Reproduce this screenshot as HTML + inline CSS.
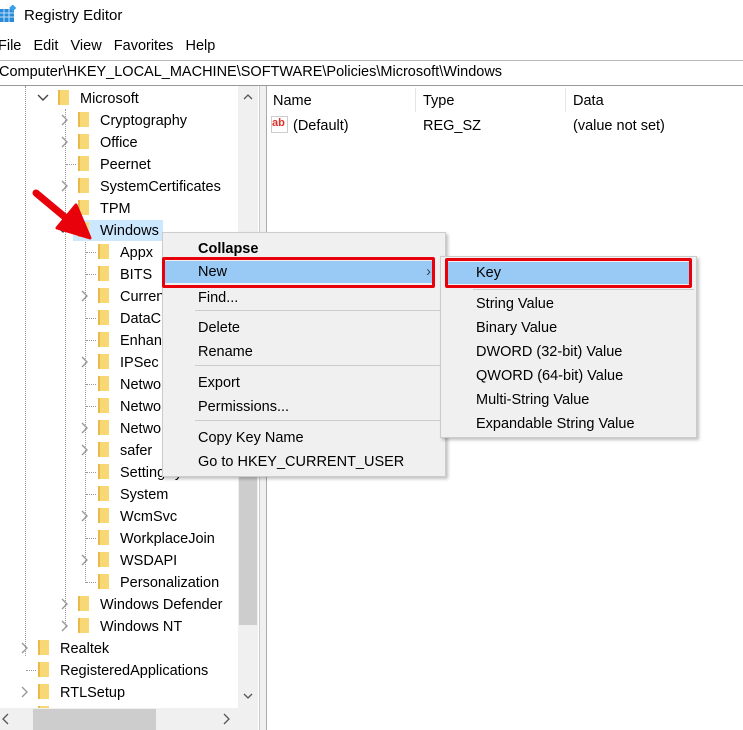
<!DOCTYPE html><html><head><style>
body{margin:0;width:743px;height:730px;overflow:hidden;background:#fff;font-family:"Liberation Sans",sans-serif;font-size:14.5px;color:#000;position:relative}
.a{position:absolute;white-space:nowrap}
.r{position:absolute;height:22px;line-height:22px;white-space:nowrap}
.f{position:absolute;width:11px;height:15px;background:#f8d775;border-left:2px solid #e9b949;box-sizing:border-box}
.c{position:absolute}
.dv{position:absolute;border-left:1px dotted #999}
.dh{position:absolute;border-top:1px dotted #999;width:10px}
.menu{position:absolute;background:#f0f0f0;border:1px solid #ccc;box-shadow:2px 2px 3px rgba(0,0,0,.25)}
.mi{position:absolute;left:0;right:0;height:22px;line-height:22px}
.sep{position:absolute;height:1px;background:#ccc}
</style></head><body>
<svg class="a" style="left:0;top:5px" width="16" height="18"><rect x="0" y="4" width="14" height="13" fill="#2a8ad8"/><path d="M0 8h14M0 12h14M4 4v13M9 4v13" stroke="#bfe0fa" stroke-width="1"/><rect x="10" y="0" width="5" height="5" fill="#3ba0e6" transform="rotate(45 12 3)"/></svg>
<div class="a" style="left:24px;top:7px;font-size:15px">Registry Editor</div>
<div class="a" style="left:-2px;top:38px;font-size:14.5px">File&nbsp;&nbsp;&nbsp;Edit&nbsp;&nbsp;&nbsp;View&nbsp;&nbsp;&nbsp;Favorites&nbsp;&nbsp;&nbsp;Help</div>
<div class="a" style="left:0;top:60px;width:743px;height:24px;border-top:1px solid #bbb;border-bottom:1px solid #999"></div>
<div class="a" style="left:-1px;top:64px;font-size:14.5px">Computer\HKEY_LOCAL_MACHINE\SOFTWARE\Policies\Microsoft\Windows</div>
<div class="a" style="left:259px;top:86px;width:6px;height:644px;border-left:1px solid #ccc;border-right:1px solid #aaa;background:#f0f0f0"></div>
<div class="a" style="left:238px;top:86px;width:20px;height:622px;background:#f0f0f0"></div>
<div class="a" style="left:239px;top:255px;width:18px;height:370px;background:#cdcdcd"></div>
<svg class="a" style="left:241px;top:92px" width="14" height="10"><path d="M3 7L7 3L11 7" stroke="#555" fill="none" stroke-width="1.3"/></svg>
<svg class="a" style="left:241px;top:691px" width="14" height="10"><path d="M3 3L7 7L11 3" stroke="#555" fill="none" stroke-width="1.3"/></svg>
<div class="dv" style="left:25px;top:86px;height:570px"></div>
<div class="dv" style="left:65px;top:109px;height:518px"></div>
<div class="dv" style="left:85px;top:242px;height:341px"></div>
<div class="a" style="left:73px;top:220px;width:90px;height:21px;background:#cce8ff"></div>
<div id="tree"></div>
<div class="a" style="left:273px;top:93px">Name</div>
<div class="a" style="left:415px;top:88px;height:24px;border-left:1px solid #e5e5e5"></div>
<div class="a" style="left:423px;top:93px">Type</div>
<div class="a" style="left:565px;top:88px;height:24px;border-left:1px solid #e5e5e5"></div>
<div class="a" style="left:573px;top:93px">Data</div>
<div class="a" style="left:271px;top:116px;width:17px;height:17px;background:#fff;border:1px solid #ccc;box-sizing:border-box;color:#d9342b;font-size:11px;font-weight:bold;line-height:13px">ab</div>
<div class="a" style="left:293px;top:118px">(Default)</div>
<div class="a" style="left:423px;top:118px">REG_SZ</div>
<div class="a" style="left:573px;top:118px">(value not set)</div>
<div class="menu" style="left:162px;top:232px;width:282px;height:243px">
<div class="mi" style="top:5px;padding-left:35px;font-weight:bold">Collapse</div>
<div class="mi" style="top:28px;left:2px;right:12px;background:#99c9f5;padding-left:33px">New<span style="position:absolute;right:2px;color:#444">&rsaquo;</span></div>
<div class="mi" style="top:54px;padding-left:35px">Find...</div>
<div class="sep" style="top:77px;left:32px;right:2px"></div>
<div class="mi" style="top:84px;padding-left:35px">Delete</div>
<div class="mi" style="top:108px;padding-left:35px">Rename</div>
<div class="sep" style="top:132px;left:32px;right:2px"></div>
<div class="mi" style="top:139px;padding-left:35px">Export</div>
<div class="mi" style="top:163px;padding-left:35px">Permissions...</div>
<div class="sep" style="top:187px;left:32px;right:2px"></div>
<div class="mi" style="top:194px;padding-left:35px">Copy Key Name</div>
<div class="mi" style="top:218px;padding-left:35px">Go to HKEY_CURRENT_USER</div>
</div>
<div class="a" style="left:162px;top:257px;width:267px;height:25px;border:3px solid #e8000b;border-radius:2px"></div>
<div class="menu" style="left:440px;top:256px;width:255px;height:180px">
<div class="mi" style="top:5px;left:4px;right:4px;background:#99c9f5;padding-left:31px">Key</div>
<div class="sep" style="top:32px;left:32px;right:2px"></div>
<div class="mi" style="top:36px;padding-left:35px">String Value</div>
<div class="mi" style="top:60px;padding-left:35px">Binary Value</div>
<div class="mi" style="top:84px;padding-left:35px">DWORD (32-bit) Value</div>
<div class="mi" style="top:108px;padding-left:35px">QWORD (64-bit) Value</div>
<div class="mi" style="top:132px;padding-left:35px">Multi-String Value</div>
<div class="mi" style="top:156px;padding-left:35px">Expandable String Value</div>
</div>
<div class="a" style="left:445px;top:258px;width:241px;height:24px;border:3px solid #e8000b;border-radius:2px"></div>
<svg class="a" style="left:0;top:0" width="120" height="260"><path d="M36 193L78 228" stroke="#e8000b" stroke-width="7" stroke-linecap="round"/><path d="M76 205L90 238L57 228Z" fill="#e8000b" stroke="#e8000b" stroke-width="3" stroke-linejoin="round"/></svg>
<script>
var rows=[[98,1,'v','Microsoft'],[120,2,'>','Cryptography'],[142,2,'>','Office'],[164,2,'-','Peernet'],[186,2,'>','SystemCertificates'],[208,2,'','TPM'],[230,2,'v','Windows'],[252,3,'-','Appx'],[274,3,'-','BITS'],[296,3,'>','Curren'],[318,3,'-','DataC'],[340,3,'-','Enhan'],[362,3,'>','IPSec'],[384,3,'-','Netwo'],[406,3,'-','Netwo'],[428,3,'>','Netwo'],[450,3,'>','safer'],[472,3,'-','SettingSync'],[494,3,'-','System'],[516,3,'>','WcmSvc'],[538,3,'-','WorkplaceJoin'],[560,3,'>','WSDAPI'],[582,3,'-','Personalization'],[604,2,'>','Windows Defender'],[626,2,'>','Windows NT'],[648,0,'>','Realtek'],[670,0,'-','RegisteredApplications'],[692,0,'>','RTLSetup'],[714,0,'>','ServiceLocationClient']];
var h='';rows.forEach(function(r){var y=r[0],x=20*r[1];
if(r[2]=='>')h+='<svg class="c" style="left:'+(x+18)+'px;top:'+(y-7)+'px" width="12" height="14"><path d="M4 2L9 7L4 12" stroke="#999" fill="none" stroke-width="1.4"/></svg>';
else if(r[2]=='v')h+='<svg class="c" style="left:'+(x+16)+'px;top:'+(y-6)+'px" width="14" height="12"><path d="M2 3L7 8L12 3" stroke="#444" fill="none" stroke-width="1.4"/></svg>';
else if(r[2]=='-')h+='<div class="dh" style="left:'+(x+26)+'px;top:'+y+'px"></div>';
h+='<div class="f" style="left:'+(x+38)+'px;top:'+(y-8)+'px"></div>';
h+='<div class="r" style="left:'+(x+60)+'px;top:'+(y-10)+'px">'+r[3]+'</div>';});
document.getElementById('tree').innerHTML=h;
</script>
<div class="a" style="left:0;top:708px;width:258px;height:22px;background:#f0f0f0"></div>
<div class="a" style="left:33px;top:709px;width:123px;height:21px;background:#cdcdcd"></div>
<svg class="a" style="left:0;top:712px" width="12" height="14"><path d="M8 2L3 7L8 12" stroke="#555" fill="none" stroke-width="1.3"/></svg>
<svg class="a" style="left:220px;top:712px" width="12" height="14"><path d="M4 2L9 7L4 12" stroke="#555" fill="none" stroke-width="1.3"/></svg>
</body></html>
